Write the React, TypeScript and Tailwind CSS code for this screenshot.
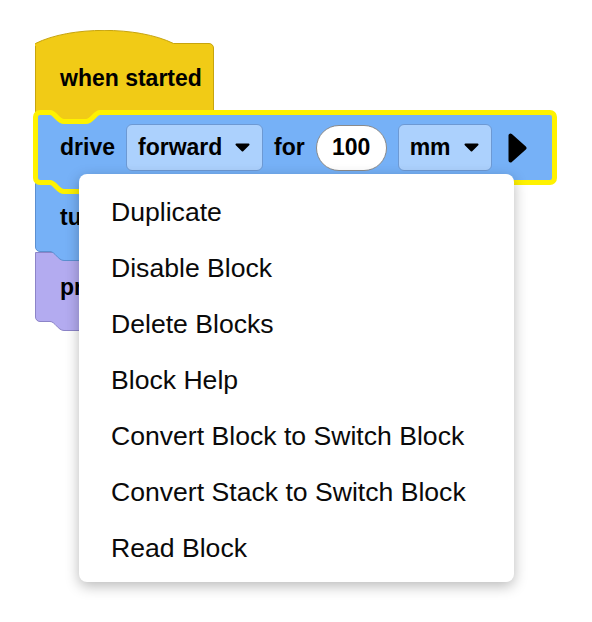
import React from "react";

const menuItems = [
  "Duplicate",
  "Disable Block",
  "Delete Blocks",
  "Block Help",
  "Convert Block to Switch Block",
  "Convert Stack to Switch Block",
  "Read Block",
];

const notchPath = "M0,2.5 C5,2.5 8,11.5 14,11.5 L36,11.5 C42,11.5 45,2.5 50,2.5";
const notchFill = "M0,0 L0,2.5 C5,2.5 8,11.5 14,11.5 L36,11.5 C42,11.5 45,2.5 50,2.5 L50,0 Z";
const tabPath = "M0,0.5 C5,0.5 8,9.5 14,9.5 L36,9.5 C42,9.5 45,0.5 50,0.5";
const tabFill = "M0,0 L0,0.5 C5,0.5 8,9.5 14,9.5 L36,9.5 C42,9.5 45,0.5 50,0.5 L50,0 Z";

const Caret = () => (
  <svg width="15" height="9" viewBox="0 0 15 9">
    <path d="M1.5,1.5 L13.5,1.5 L7.5,7.5 Z" fill="#000" stroke="#000" strokeWidth="2" strokeLinejoin="round" />
  </svg>
);

const Dropdown: React.FC<{ label: string; className?: string }> = ({ label, className }) => (
  <div
    className={`flex h-[47px] items-center justify-between rounded-[6px] border border-[#6d99d3] bg-[#acd1fd] pl-[11px] pr-[12px] ${className ?? ""}`}
  >
    <span>{label}</span>
    <Caret />
  </div>
);

// thin tab under a plain block
const Tab: React.FC<{ fill: string; stroke: string }> = ({ fill, stroke }) => (
  <svg className="absolute left-[14px] top-full z-10" width="50" height="12" viewBox="0 0 50 12">
    <path d={tabFill} fill={fill} />
    <path d={tabPath} fill="none" stroke={stroke} strokeWidth="1" />
  </svg>
);

export default function App() {
  return (
    <div
      className="relative h-[622px] w-[592px] overflow-hidden bg-white text-black"
      style={{ fontFamily: '"Liberation Sans", Arial, sans-serif' }}
    >
      <div className="flex flex-col items-start pl-[35px] pt-[43px] text-[23px] font-bold">
        {/* hat block */}
        <div className="relative flex h-[70px] w-[179px] items-center rounded-tr-[5px] border border-[#c7a40e] bg-[#f1cb16] pl-[24px]">
          <svg className="absolute left-[-1px] top-[-14px]" width="140" height="16" viewBox="0 0 140 16">
            <path d="M0,13.5 C35,-4 103,-4 139,13.5 L139,16 L0,16 Z" fill="#f1cb16" />
            <path d="M0.5,13.5 C35,-4 103,-4 138.5,13.5" fill="none" stroke="#c7a40e" strokeWidth="1" />
          </svg>
          <span>when started</span>
        </div>

        {/* selected drive block */}
        <div className="relative z-10 ml-[-2px] mt-[-3px] flex h-[75px] w-[524px] items-center rounded-[7px] border-[5px] border-[#fff200] bg-[#76b1f7] pl-[22px]">
          <svg className="absolute left-[12px] top-[-5px]" width="50" height="16" viewBox="0 0 50 16">
            <path d={notchFill} fill="#f1cb16" />
            <path d={notchPath} fill="none" stroke="#fff200" strokeWidth="5" strokeLinejoin="round" />
          </svg>
          <svg className="absolute left-[12px] top-full" width="50" height="16" viewBox="0 0 50 16">
            <path d={notchFill} fill="#76b1f7" />
            <path d={notchPath} fill="none" stroke="#fff200" strokeWidth="5" strokeLinejoin="round" />
          </svg>
          <span>drive</span>
          <Dropdown label="forward" className="ml-[11px] w-[137px]" />
          <span className="ml-[11px]">for</span>
          <div className="ml-[11px] flex h-[46px] w-[71px] items-center justify-center rounded-full border border-[#8a8a8a] bg-white">
            100
          </div>
          <Dropdown label="mm" className="ml-[11px] w-[94px]" />
          <svg className="ml-[16px]" width="19" height="30" viewBox="0 0 19 30">
            <path d="M2.5,2.5 L2.5,27.5 L16.5,15 Z" fill="#000" stroke="#000" strokeWidth="4" strokeLinejoin="round" />
          </svg>
        </div>

        {/* turn block */}
        <div className="relative z-[5] mt-[-2px] flex h-[69px] w-[320px] items-center rounded-bl-[5px] border border-[#5b8fd0] bg-[#76b1f7] pl-[24px]">
          <span>turn</span>
          <Tab fill="#76b1f7" stroke="#5b8fd0" />
        </div>

        {/* print block */}
        <div className="relative flex h-[70px] w-[320px] items-center rounded-bl-[5px] border border-[#8c84c8] bg-[#b3abf0] pl-[24px]">
          <span>print</span>
          <Tab fill="#b3abf0" stroke="#8c84c8" />
        </div>
      </div>

      {/* context menu */}
      <div className="absolute left-[79px] top-[174px] z-20 w-[435px] rounded-[8px] bg-white pb-[5px] pt-[11px] shadow-[0_4px_14px_rgba(0,0,0,0.28)]">
        {menuItems.map((item) => (
          <div key={item} className="flex h-[56px] items-center pl-[32px] text-[26.6px] text-[#0a0a0a]">
            {item}
          </div>
        ))}
      </div>
    </div>
  );
}
